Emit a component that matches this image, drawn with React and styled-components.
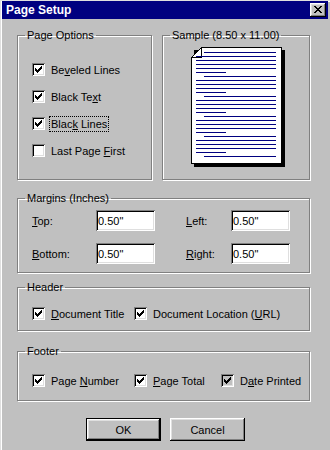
import React from 'react'
import styled, { createGlobalStyle } from 'styled-components'

const GlobalStyle = createGlobalStyle`
  html, body {
    margin: 0;
    padding: 0;
    background: #c0c0c0;
  }
  body {
    font-family: "Liberation Sans", Arial, sans-serif;
    font-size: 11px;
    color: #000;
  }
`

const Window = styled.div`
  box-sizing: border-box;
  width: 330px;
  height: 450px;
  background: #c0c0c0;
  border-top: 1px solid #dfdfdf;
  border-left: 1px solid #dfdfdf;
  box-shadow: inset 1px 1px 0 #fff;
  padding: 0 2px 0 1px;
  overflow: hidden;
`

const TitleBar = styled.div`
  height: 18px;
  background: #000080;
  display: flex;
  align-items: center;
  justify-content: space-between;
  padding: 0 2px 0 4px;
`

const Title = styled.span`
  color: #fff;
  font-weight: bold;
  font-size: 12px;
  line-height: 18px;
`

const CloseButton = styled.div`
  box-sizing: border-box;
  width: 16px;
  height: 14px;
  background: #c0c0c0;
  box-shadow: inset -1px -1px 0 #000, inset 1px 1px 0 #fff,
    inset -2px -2px 0 #808080, inset 2px 2px 0 #dfdfdf;
  display: flex;
  align-items: center;
  justify-content: center;
  padding-bottom: 1px;
`

const Body = styled.div`
  padding: 10px 18px 0 15px;
  display: flex;
  flex-direction: column;
`

const TopRow = styled.div`
  display: flex;
  gap: 10px;
`

const GroupBox = styled.fieldset`
  box-sizing: border-box;
  margin: ${(p) => p.$mt || 0}px 0 0 0;
  padding: 0;
  min-width: 0;
  width: ${(p) => (p.$width ? `${p.$width}px` : 'auto')};
  flex: ${(p) => (p.$width ? 'none' : '1')};
  border: 1px solid #808080;
  box-shadow: inset 1px 1px 0 #fff, 1px 1px 0 #fff;
`

const Legend = styled.legend`
  margin-left: 7px;
  padding: 0 2px;
  line-height: 13px;
  font-size: 11px;
`

const GroupContent = styled.div`
  padding: ${(p) => p.$pad};
`

const OptionList = styled.div`
  display: flex;
  flex-direction: column;
  gap: 14px;
`

const CheckGrid = styled.div`
  display: grid;
  grid-template-columns: 102px 87px auto;
`

const CheckRow = styled.div`
  display: flex;
  align-items: center;
  height: 13px;
  gap: 4px;
`

const Box = styled.span`
  box-sizing: border-box;
  width: 13px;
  height: 13px;
  flex: none;
  background: ${(p) => (p.$dimmed ? '#c0c0c0' : '#fff')};
  box-shadow: inset 1px 1px 0 #808080, inset -1px -1px 0 #fff,
    inset 2px 2px 0 #000, inset -2px -2px 0 #dfdfdf;
  display: flex;
  align-items: center;
  justify-content: center;
`

const CheckLabel = styled.span`
  padding: 0 1px;
  line-height: 14px;
  white-space: nowrap;
  border: 1px dotted ${(p) => (p.$focused ? '#000' : 'transparent')};
`

const SampleWrap = styled.div`
  display: flex;
  justify-content: center;
  padding: 5px 0 0 3px;
`

const MarginGrid = styled.div`
  display: grid;
  grid-template-columns: 64px 90px 45px 59px;
  row-gap: 12px;
  align-items: center;
`

const FieldLabel = styled.span`
  white-space: nowrap;
`

const TextField = styled.input`
  box-sizing: border-box;
  width: 59px;
  height: 21px;
  margin: 0;
  padding: 0;
  border: none;
  outline: none;
  background: #fff;
  font-family: "Liberation Sans", Arial, sans-serif;
  font-size: 11px;
  color: #000;
  box-shadow: inset 1px 1px 0 #808080, inset -1px -1px 0 #fff,
    inset 2px 2px 0 #000, inset -2px -2px 0 #dfdfdf;
  padding-left: 2px;
`

const ButtonRow = styled.div`
  margin-top: 17px;
  display: flex;
  justify-content: center;
  gap: 9px;
  padding-left: 4px;
`

const Button = styled.button`
  box-sizing: border-box;
  width: 75px;
  height: 23px;
  margin: 0;
  padding: 0;
  background: #c0c0c0;
  font-family: "Liberation Sans", Arial, sans-serif;
  font-size: 11px;
  color: #000;
  border: ${(p) => (p.$default ? '1px solid #000' : 'none')};
  box-shadow: inset -1px -1px 0 #000, inset 1px 1px 0 #fff,
    inset -2px -2px 0 #808080, inset 2px 2px 0 #dfdfdf;
`

const CHECK = 'M1 3H2V4H3V5H4V4H5V3H6V2H7V1H8V4H7V5H6V6H5V7H4V8H3V7H2V6H1Z'

const X_ROWS = [
  [[0, 2], [6, 2]],
  [[1, 2], [5, 2]],
  [[2, 4]],
  [[3, 2]],
  [[2, 4]],
  [[1, 2], [5, 2]],
  [[0, 2], [6, 2]],
]

function CloseIcon() {
  return (
    <svg width="8" height="7" viewBox="0 0 8 7" shapeRendering="crispEdges">
      {X_ROWS.map((row, y) =>
        row.map(([x, w]) => <rect key={`${y}_${x}`} x={x} y={y} width={w} height="1" fill="#000" />)
      )}
    </svg>
  )
}

function Checkbox({ checked = true, dimmed, focused, children }) {
  return (
    <CheckRow>
      <Box $dimmed={dimmed}>
        {checked && (
          <svg width="9" height="9" viewBox="0 0 9 9" shapeRendering="crispEdges">
            <path d={CHECK} fill="#000" />
          </svg>
        )}
      </Box>
      <CheckLabel $focused={focused}>{children}</CheckLabel>
    </CheckRow>
  )
}

// page preview: first paragraph has four full lines, the rest three
function buildLines() {
  const lines = [{ y: 5, kind: 'indent' }]
  ;[9, 13, 17, 21].forEach((y) => lines.push({ y, kind: 'full' }))
  lines.push({ y: 25, kind: 'short' })
  for (let base = 29; base <= 109; base += 20) {
    lines.push({ y: base, kind: 'indent' })
    if (base === 109) break
    ;[4, 8, 12].forEach((d) => lines.push({ y: base + d, kind: 'full' }))
    lines.push({ y: base + 16, kind: 'short' })
  }
  return lines
}

const LINE_X = {
  indent: [13, 72],
  full: [5, 80],
  short: [5, 30],
}

function PagePreview() {
  return (
    <svg width="94" height="120" viewBox="0 0 94 120" shapeRendering="crispEdges">
      <rect x="3" y="3" width="91" height="117" fill="#000" />
      <path d="M0.5 10.5 L10.5 0.5 H90.5 V116.5 H0.5 Z" fill="#fff" stroke="#000" />
      <path d="M0.5 10.5 H10.5 V0.5" fill="none" stroke="#000" />
      {buildLines().map((l) => (
        <rect key={l.y} x={LINE_X[l.kind][0]} y={l.y} width={LINE_X[l.kind][1]} height="1" fill="#000080" />
      ))}
    </svg>
  )
}

export default function App() {
  return (
    <>
      <GlobalStyle />
      <Window>
        <TitleBar>
          <Title>Page Setup</Title>
          <CloseButton>
            <CloseIcon />
          </CloseButton>
        </TitleBar>
        <Body>
          <TopRow>
            <GroupBox $width={135}>
              <Legend>Page Options</Legend>
              <GroupContent $pad="21px 0 22px 14px">
                <OptionList>
                  <Checkbox>Be<u>v</u>eled Lines</Checkbox>
                  <Checkbox>Black Te<u>x</u>t</Checkbox>
                  <Checkbox focused>Blac<u>k</u> Lines</Checkbox>
                  <Checkbox checked={false}>Last Page <u>F</u>irst</Checkbox>
                </OptionList>
              </GroupContent>
            </GroupBox>
            <GroupBox>
              <Legend>Sample (8.50 x 11.00)</Legend>
              <SampleWrap>
                <PagePreview />
              </SampleWrap>
            </GroupBox>
          </TopRow>

          <GroupBox $mt={12}>
            <Legend>Margins (Inches)</Legend>
            <GroupContent $pad="5px 0 8px 14px">
              <MarginGrid>
                <FieldLabel><u>T</u>op:</FieldLabel>
                <TextField readOnly defaultValue={'0.50"'} />
                <FieldLabel><u>L</u>eft:</FieldLabel>
                <TextField readOnly defaultValue={'0.50"'} />
                <FieldLabel><u>B</u>ottom:</FieldLabel>
                <TextField readOnly defaultValue={'0.50"'} />
                <FieldLabel><u>R</u>ight:</FieldLabel>
                <TextField readOnly defaultValue={'0.50"'} />
              </MarginGrid>
            </GroupContent>
          </GroupBox>

          <GroupBox $mt={8}>
            <Legend>Header</Legend>
            <GroupContent $pad="13px 0 10px 14px">
              <CheckGrid>
                <Checkbox><u>D</u>ocument Title</Checkbox>
                <Checkbox>Document Location (<u>U</u>RL)</Checkbox>
              </CheckGrid>
            </GroupContent>
          </GroupBox>

          <GroupBox $mt={14}>
            <Legend>Footer</Legend>
            <GroupContent $pad="16px 0 13px 14px">
              <CheckGrid>
                <Checkbox>Page <u>N</u>umber</Checkbox>
                <Checkbox><u>P</u>age Total</Checkbox>
                <Checkbox dimmed>D<u>a</u>te Printed</Checkbox>
              </CheckGrid>
            </GroupContent>
          </GroupBox>

          <ButtonRow>
            <Button $default>OK</Button>
            <Button>Cancel</Button>
          </ButtonRow>
        </Body>
      </Window>
    </>
  )
}
